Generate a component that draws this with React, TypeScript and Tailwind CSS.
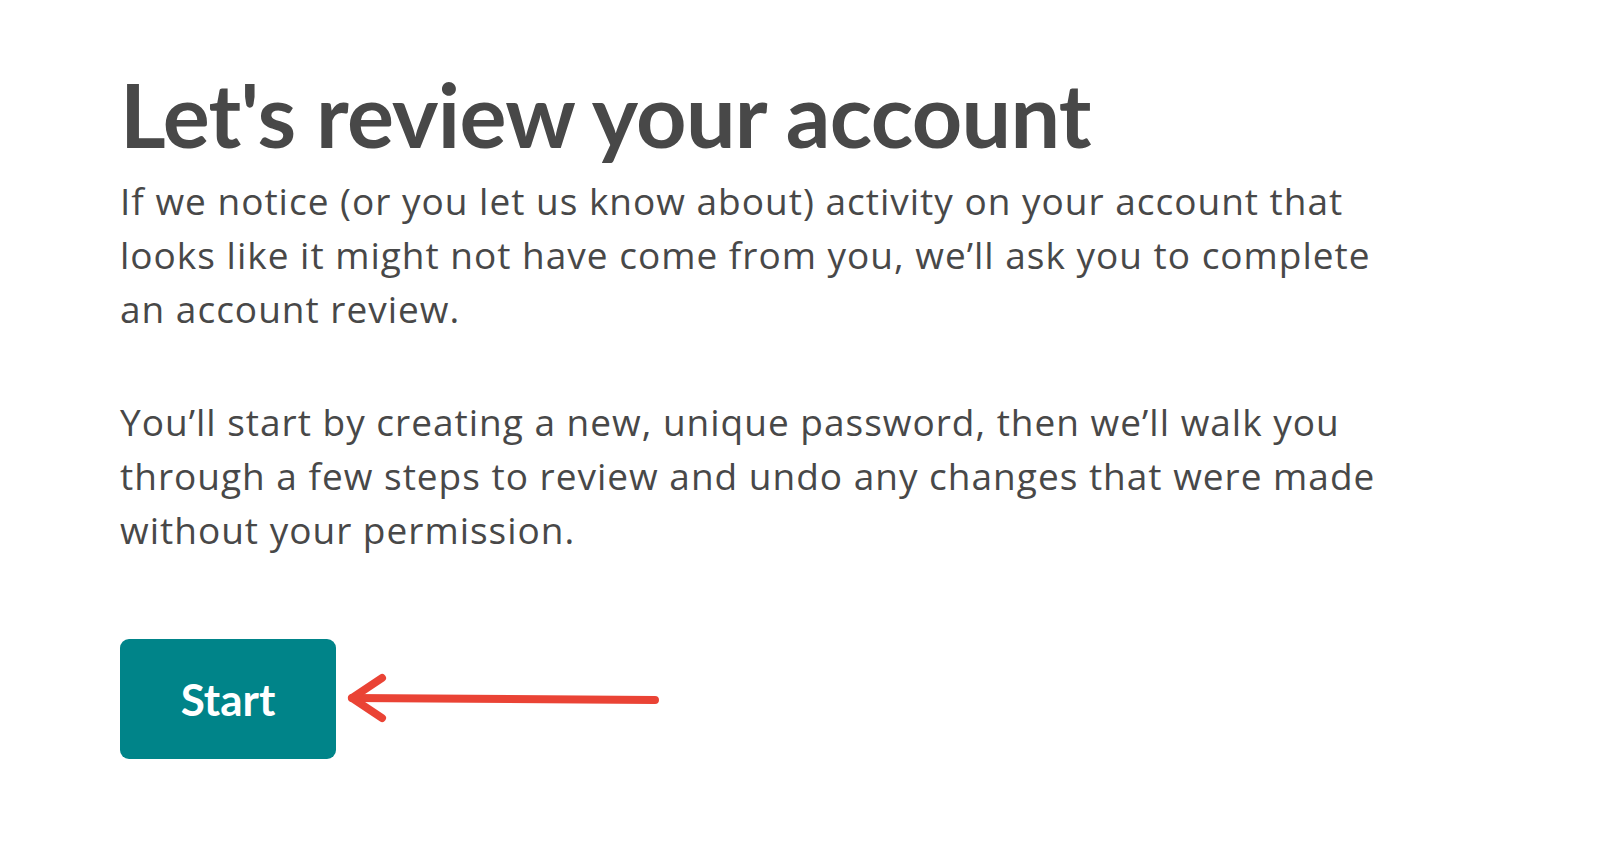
import React from 'react';

const App: React.FC = () => {
  return (
    <div className="min-h-screen w-full bg-white pl-[120px] pt-[62px] text-[#484848]" style={{ fontFamily: 'Lato, "Noto Sans", sans-serif' }}>
      <h1 className="text-[88px] font-bold leading-[104px] tracking-[-0.7px]">Let's review your account</h1>

      <div style={{ fontFamily: '"Open Sans", "Noto Sans", sans-serif' }}>
        <p className="mt-[8px] text-[37px] leading-[54px] tracking-[1px]">
          If we notice (or you let us know about) activity on your account that
          <br />
          looks like it might not have come from you, we’ll ask you to complete
          <br />
          an account review.
        </p>

        <p className="mt-[59px] text-[37px] leading-[54px] tracking-[1px]">
          You’ll start by creating a new, unique password, then we’ll walk you
          <br />
          through a few steps to review and undo any changes that were made
          <br />
          without your permission.
        </p>
      </div>

      <div className="mt-[82px] flex items-center">
        <button className="flex h-[120px] w-[216px] items-center justify-center rounded-[9px] bg-[#008489] text-[44px] font-bold text-white">
          Start
        </button>
        {/* red annotation arrow */}
        <svg width="320" height="60" viewBox="0 0 320 60" className="ml-[6px]">
          <path d="M10 29 L313 31" stroke="#ea4335" strokeWidth="8" strokeLinecap="round" fill="none" />
          <path d="M40 9 L10 29 L40 49" stroke="#ea4335" strokeWidth="8" strokeLinecap="round" strokeLinejoin="round" fill="none" />
        </svg>
      </div>
    </div>
  );
};

export default App;
